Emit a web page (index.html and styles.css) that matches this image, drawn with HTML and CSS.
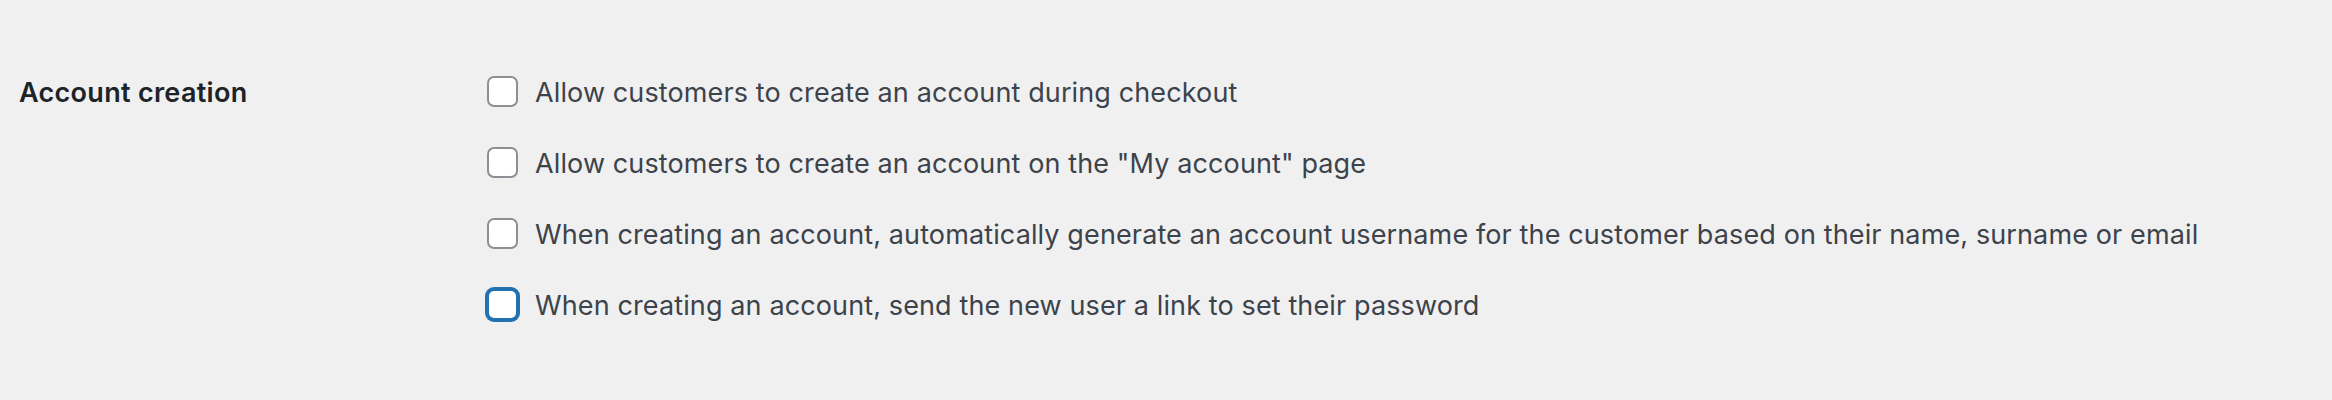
FILE: index.html
```html
<!DOCTYPE html>
<html lang="en">
<head>
    <meta charset="UTF-8">
    <meta name="viewport" content="width=device-width, initial-scale=1.0">
    <title>Accounts &amp; Privacy</title>
    <link rel="stylesheet" href="styles.css">
</head>
<body>
    <div class="form-row">
        <div class="row-title">Account creation</div>
        <fieldset class="row-options">
            <label class="option">
                <input type="checkbox" name="enable_guest_signup">
                <span>Allow customers to create an account during checkout</span>
            </label>
            <label class="option">
                <input type="checkbox" name="enable_myaccount_registration">
                <span>Allow customers to create an account on the "My account" page</span>
            </label>
            <label class="option">
                <input type="checkbox" name="generate_username">
                <span>When creating an account, automatically generate an account username for the customer based on their name, surname or email</span>
            </label>
            <label class="option">
                <input type="checkbox" name="generate_password" class="is-focused">
                <span>When creating an account, send the new user a link to set their password</span>
            </label>
        </fieldset>
    </div>
</body>
</html>
```

FILE: styles.css
```css
body {
    margin: 0;
    padding: 0;
    background-color: #f0f0f1;
    font-family: Inter, "Noto Sans", sans-serif;
    font-size: 27px;
    line-height: 40px;
    letter-spacing: 0.12px;
    color: #3c434a;
}
.form-row {
    display: flex;
    padding: 72px 0 0 19px;
}
.row-title {
    width: 468px;
    flex-shrink: 0;
    padding-top: 1px;
    font-weight: 600;
    letter-spacing: 0.3px;
    color: #1d2327;
}
.row-options {
    margin: 0;
    padding: 0;
    border: 0;
    display: flex;
    flex-direction: column;
    gap: 30px;
}
.option {
    display: flex;
    align-items: flex-start;
    gap: 17px;
}
.option span {
    padding-top: 1px;
}
.option input {
    appearance: none;
    -webkit-appearance: none;
    margin: 4px 0 0;
    width: 31px;
    height: 31px;
    flex-shrink: 0;
    border: 2px solid #8c8f94;
    border-radius: 7px;
    background-color: #fff;
    box-sizing: border-box;
}
.option input.is-focused {
    border-color: #2271b1;
    box-shadow: 0 0 0 2px #2271b1;
}
```
